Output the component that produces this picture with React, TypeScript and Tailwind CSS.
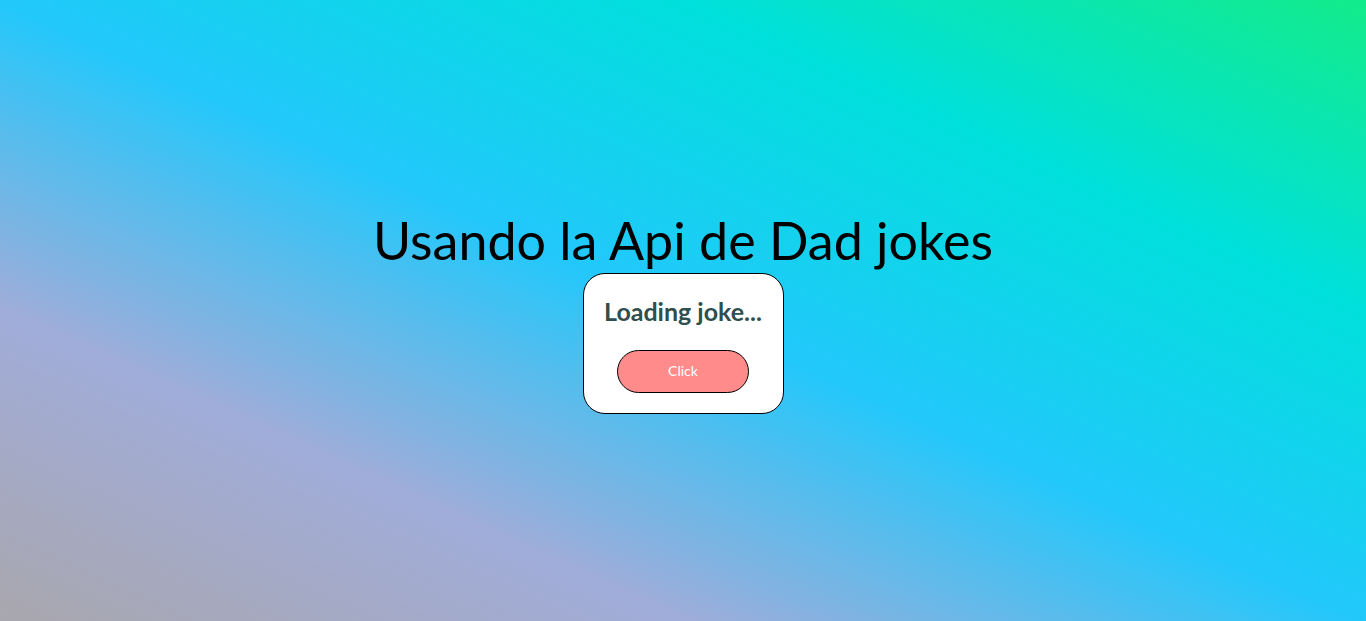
export default function App() {
  return (
    <div className="min-h-screen w-full flex flex-col items-center justify-center bg-[linear-gradient(to_right_top,#a9a7ae,#a0acd9,#22c8fb,#00e0dc,#12eb8a)] font-['Lato',sans-serif]">
      <h1 className="text-[52px] leading-[64px] text-black">Usando la Api de Dad jokes</h1>
      <div className="mt-px w-[201px] bg-white border border-black rounded-[22px] flex flex-col items-center pt-[23px] pb-[20px]">
        <h3 className="text-[25px] leading-[28px] font-bold text-[#2f4f4f]">Loading joke...</h3>
        <button className="mt-[25px] w-[132px] h-[43px] rounded-full bg-[#ff8b8b] border border-black text-white text-sm">
          Click
        </button>
      </div>
    </div>
  );
}
